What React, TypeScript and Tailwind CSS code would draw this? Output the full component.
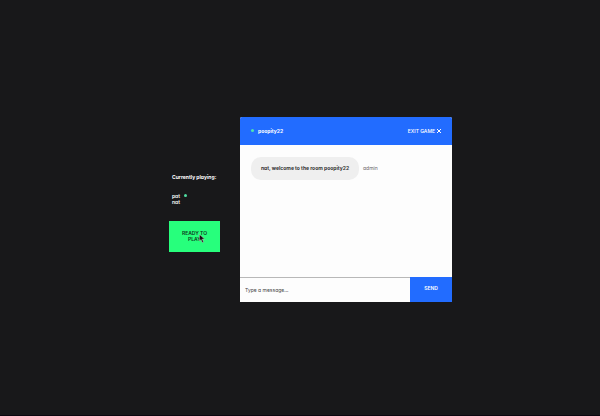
import { useState } from 'react';

const players = [
  { name: 'pat', active: true },
  { name: 'nat', active: false },
];

function Sidebar() {
  return (
    <aside className="flex w-[51px] flex-col pt-1.5">
      <h2 className="pl-[3px] text-[5px] leading-[8px] font-bold whitespace-nowrap text-white">
        Currently playing:
      </h2>
      <ul className="mt-3 pl-[3px] text-[5px] leading-[6px] font-semibold text-white">
        {players.map((player) => (
          <li key={player.name} className="flex items-center gap-1">
            {player.name}
            {player.active && <span className="size-[3px] rounded-full bg-[#4fdca0]" />}
          </li>
        ))}
      </ul>
      <div className="relative mt-4">
        <button
          type="button"
          className="h-[31px] w-full bg-[#27ff7c] px-3 text-[5px] leading-[6px] font-semibold text-[#0d3a20]"
        >
          READY TO PLAY
        </button>
        <svg
          className="pointer-events-none absolute top-[13px] left-[30px] h-[9px] w-[6px]"
          viewBox="0 0 12 18"
          aria-hidden="true"
        >
          <path
            d="M1 1v13l3-3 2.5 6 2.5-1-2.5-6H11z"
            fill="#111"
            stroke="#e8b5d0"
            strokeWidth="0.8"
          />
        </svg>
      </div>
    </aside>
  );
}

function Chat() {
  const [message, setMessage] = useState('');
  return (
    <main className="flex w-[212px] flex-col overflow-hidden rounded-t-[2px] bg-[#fdfdfd]">
      <header className="flex h-7 items-center justify-between bg-[#226cff] pr-2.5 pl-[11px] text-white">
        <div className="flex items-center gap-1">
          <span className="size-[3px] rounded-full bg-[#4fe3b0]" />
          <h1 className="text-[5px] leading-[8px] font-bold">poopity22</h1>
        </div>
        <button type="button" className="flex items-center gap-px text-[5px] leading-[8px] font-medium">
          EXIT GAME
          <svg className="size-[6px]" viewBox="0 0 12 12" aria-hidden="true">
            <path d="M2 2l8 8M10 2l-8 8" stroke="currentColor" strokeWidth="2" />
          </svg>
        </button>
      </header>
      <section className="h-[132px] px-[11px] py-3" aria-label="Messages">
        <div className="flex items-center gap-1">
          <p className="rounded-[10px] bg-[#efefef] px-[10px] py-2 text-[5px] leading-[7px] font-bold text-[#333]">
            nat, welcome to the room poopity22
          </p>
          <span className="text-[5px] leading-[7px] text-[#666]">admin</span>
        </div>
      </section>
      <form className="flex h-[25px]" onSubmit={(e) => e.preventDefault()}>
        <input
          type="text"
          aria-label="Message"
          placeholder="Type a message..."
          value={message}
          onChange={(e) => setMessage(e.target.value)}
          className="min-w-0 flex-1 border-t border-[#b8b8b8] px-[5px] text-[5px] leading-[8px] text-[#333] outline-none placeholder:text-[#444]"
        />
        <button type="submit" className="w-[42px] bg-[#226cff] text-[5px] font-semibold text-white">
          SEND
        </button>
      </form>
    </main>
  );
}

export default function App() {
  return (
    <div className="flex min-h-screen items-center justify-center gap-5 border-b border-[#0c0710] bg-[#18181a] pt-[3px] pl-[21px] font-['Inter',sans-serif] [font-feature-settings:'cv11']">
      <Sidebar />
      <Chat />
    </div>
  );
}
